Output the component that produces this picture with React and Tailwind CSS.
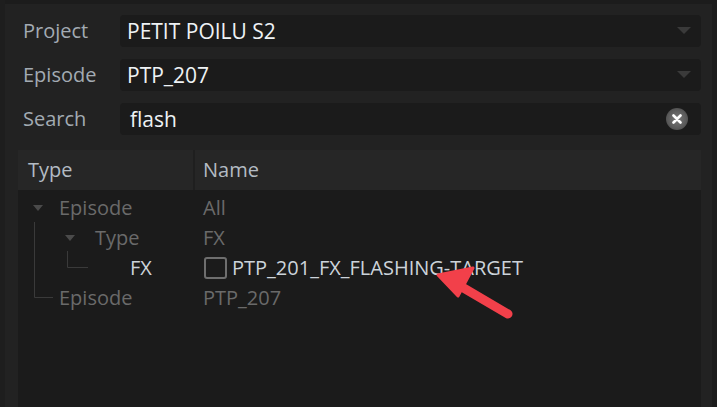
import React from "react";

function Caret() {
  return (
    <svg width="14" height="8" viewBox="0 0 14 8" className="shrink-0">
      <path d="M0 0 L14 0 L7 7 Z" fill="#3a3a3a" />
    </svg>
  );
}

function Field({ label, value, right, valueClass = "" }) {
  return (
    <div className="flex items-center h-[32px]">
      <div className="w-[103px] pl-[6px] text-[#a3abb3]">{label}</div>
      <div className="flex-1 h-full bg-[#1b1b1b] rounded-[4px] flex items-center justify-between pr-[10px]">
        <span className={"text-[#eef2f5] text-[21px] " + valueClass}>{value}</span>
        {right}
      </div>
    </div>
  );
}

function Tri() {
  return (
    <svg width="10" height="6" viewBox="0 0 10 6">
      <path d="M0 0 L10 0 L5 6 Z" fill="#4a4a4a" />
    </svg>
  );
}

export default function App() {
  return (
    <div
      className="w-[717px] h-[407px] bg-[#1c1c1c] flex overflow-hidden text-[20px] leading-none"
      style={{ fontFamily: '"Open Sans", "Noto Sans", sans-serif' }}
    >
      <div className="w-[5px] bg-[#1e1e1e]" />
      <div className="w-[707px] mt-[4px] bg-[#222222] flex flex-col pl-[12px] pr-[11px] pt-[11px]">
        <div className="flex flex-col gap-[12px]">
          <Field label="Project" value="PETIT POILU S2" valueClass="pl-[7px]" right={<Caret />} />
          <Field label="Episode" value="PTP_207" valueClass="pl-[7px]" right={<Caret />} />
          <Field
            label="Search"
            value="flash"
            valueClass="pl-[10px]"
            right={
              <div className="w-[22px] h-[22px] rounded-full bg-[radial-gradient(circle,#7a7a7a_0%,#5a5a5a_60%,#3a3a3a_100%)] flex items-center justify-center mr-[3px]">
                <svg width="10" height="10" viewBox="0 0 10 10">
                  <path d="M1.5 1.5 L8.5 8.5 M8.5 1.5 L1.5 8.5" stroke="#ffffff" strokeWidth="2.6" strokeLinecap="round" />
                </svg>
              </div>
            }
          />
        </div>
        <div className="mt-[15px] flex-1 bg-[#1b1b1b] ml-[1px] relative">
          <div className="flex h-[40px] bg-[#262626] text-[#b3bbc3]">
            <div className="w-[177px] pl-[10px] flex items-center border-r-2 border-[#1f1f1f]">Type</div>
            <div className="flex-1 pl-[8px] flex items-center">Name</div>
          </div>
          <div className="flex flex-col pt-[3px] text-[#6a6a6a]">
            <div className="flex h-[30px] items-center">
              <div className="w-[177px] flex items-center">
                <div className="w-[41px] pl-[15px] flex"><Tri /></div>
                <span>Episode</span>
              </div>
              <span className="pl-[8px]">All</span>
            </div>
            <div className="flex h-[30px] items-center">
              <div className="w-[177px] flex items-center">
                <div className="w-[77px] pl-[47px] flex"><Tri /></div>
                <span>Type</span>
              </div>
              <span className="pl-[8px]">FX</span>
            </div>
            <div className="flex h-[30px] items-center text-[#ccd3da]">
              <div className="w-[177px] pl-[112px]">FX</div>
              <div className="pl-[9px] flex items-center gap-[5px]">
                <div className="w-[23px] h-[22px] rounded-[3px] border-2 border-[#6e6e6e]" />
                <span>PTP_201_FX_FLASHING-TARGET</span>
              </div>
            </div>
            <div className="flex h-[30px] items-center">
              <div className="w-[177px] pl-[41px]">Episode</div>
              <span className="pl-[8px]">PTP_207</span>
            </div>
          </div>
          <svg className="absolute left-0 top-0 pointer-events-none" width="683" height="257">
            <path d="M16.5 72 V147.5 H35" stroke="#3a3a3a" strokeWidth="1" fill="none" />
            <path d="M49.5 101 V117.5 H70" stroke="#3a3a3a" strokeWidth="1" fill="none" />
            <path d="M490 164 L432 130" stroke="#f2404a" strokeWidth="9" strokeLinecap="round" />
            <path d="M420 125 L455 118 L440 146 Z" fill="#f2404a" stroke="#f2404a" strokeWidth="3" strokeLinejoin="round" />
          </svg>
        </div>
      </div>
      <div className="w-[5px] bg-[#1c1c1c]" />
    </div>
  );
}
